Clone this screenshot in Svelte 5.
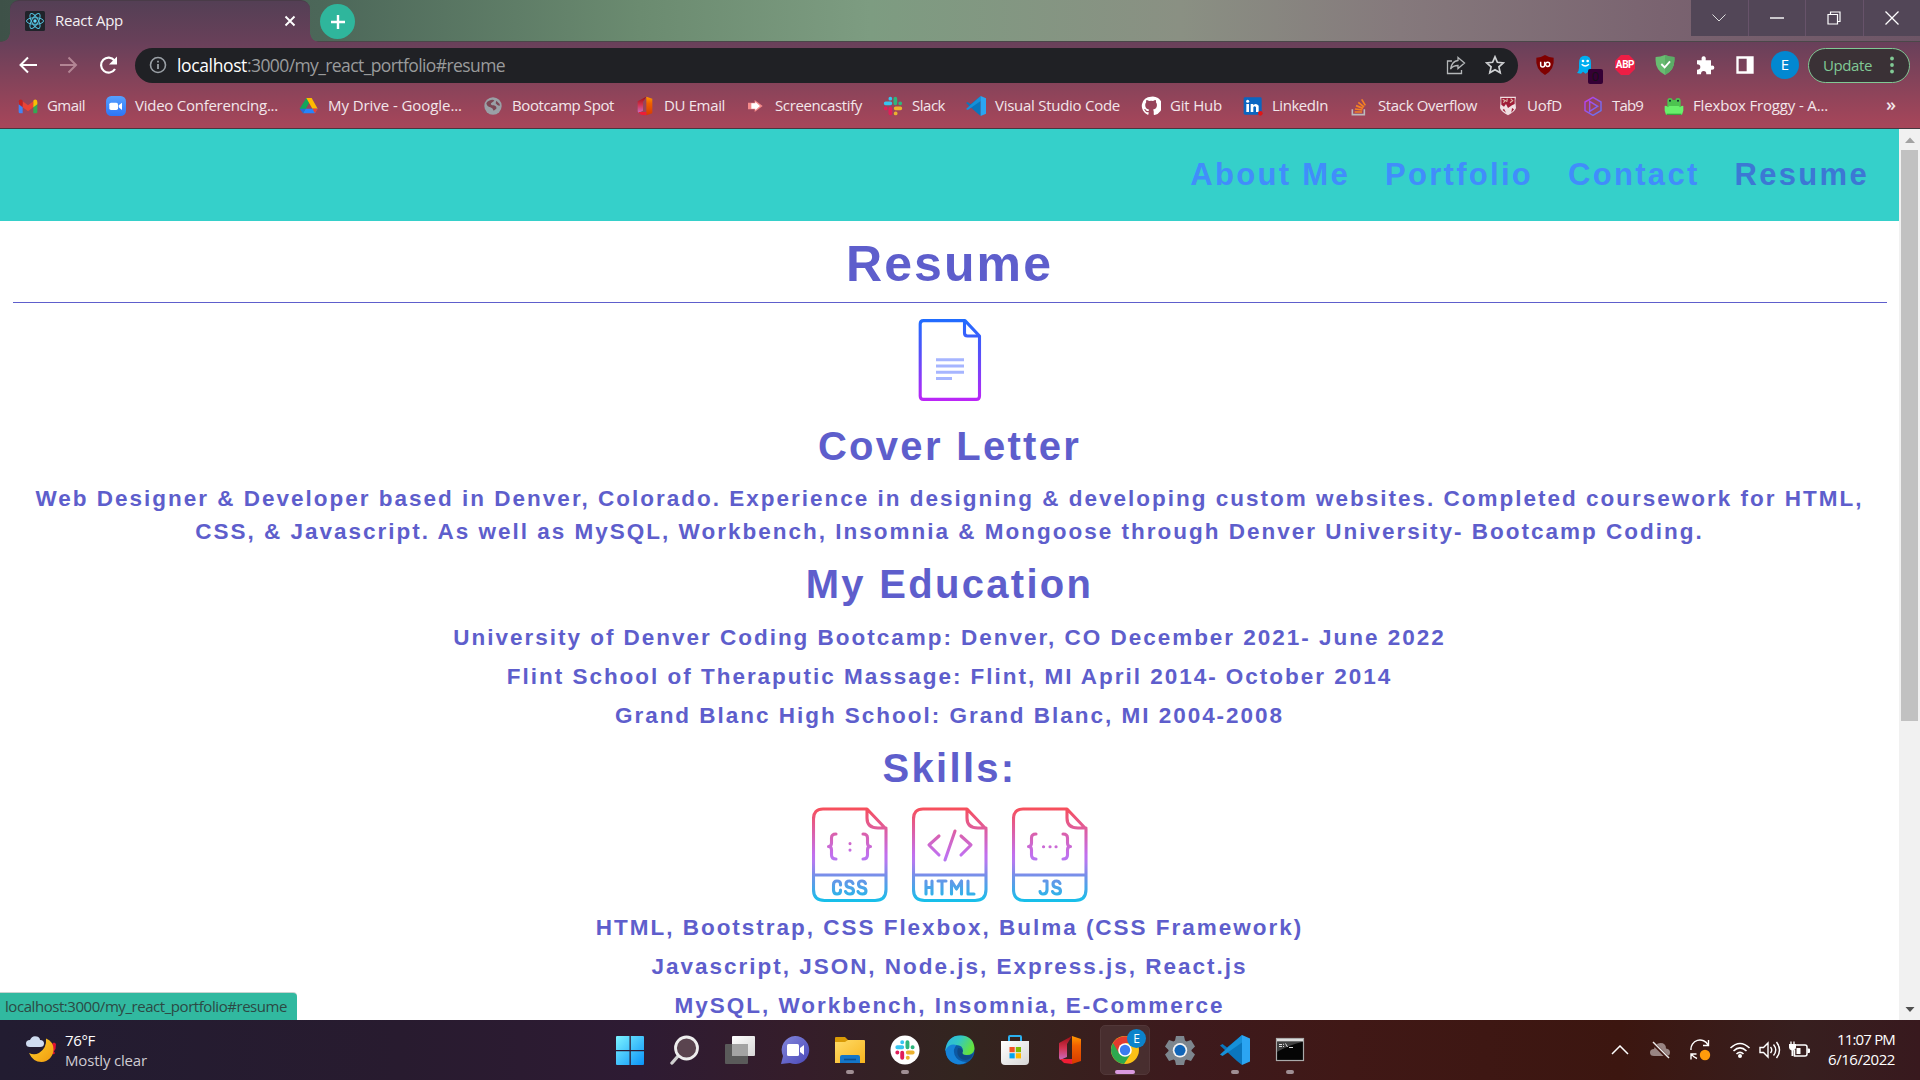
<script>
  const bookmarks = [
    ['gmail', 'Gmail', 38],
    ['zoom', 'Video Conferencing...', 143],
    ['drive', 'My Drive - Google...', 134],
    ['globe', 'Bootcamp Spot', 102],
    ['office', 'DU Email', 61],
    ['cast', 'Screencastify', 87],
    ['slack', 'Slack', 33],
    ['vscode', 'Visual Studio Code', 125],
    ['github', 'Git Hub', 52],
    ['linkedin', 'LinkedIn', 56],
    ['stack', 'Stack Overflow', 99],
    ['uofd', 'UofD', 35],
    ['tab9', 'Tab9', 31],
    ['frog', 'Flexbox Froggy - A...', 135]
  ];
  const extensions = ['ublock', 'ghost', 'abp', 'guard', 'puzzle', 'panel'];
  const education = [
    'University of Denver Coding Bootcamp: Denver, CO December 2021- June 2022',
    'Flint School of Theraputic Massage: Flint, MI April 2014- October 2014',
    'Grand Blanc High School: Grand Blanc, MI 2004-2008'
  ];
  const skills = [
    'HTML, Bootstrap, CSS Flexbox, Bulma (CSS Framework)',
    'Javascript, JSON, Node.js, Express.js, React.js',
    'MySQL, Workbench, Insomnia, E-Commerce'
  ];
  const apps = [
    ['windows', ''], ['search', ''], ['taskview', ''], ['chat', ''], ['folder', 'run'],
    ['slackapp', 'run'], ['edge', ''], ['store', ''], ['office', ''], ['chrome', 'active'],
    ['gear', ''], ['vscode', 'run'], ['cmd', 'run']
  ];

  // Spreads a label's letters so that it fills the given width.
  function fit(node, width) {
    node.style.letterSpacing = '0px';
    const natural = node.getBoundingClientRect().width;
    node.style.letterSpacing = (width - natural) / node.textContent.length + 'px';
  }
</script>

{#snippet icon(name, size)}
  <svg width={size} height={size} viewBox="0 0 30 30"><use href={'#i-' + name} /></svg>
{/snippet}

<svg class="sprite" width="0" height="0">
  <defs>
    <linearGradient id="g-doc" x1="0" y1="0" x2="0" y2="82" gradientUnits="userSpaceOnUse"><stop offset="0" stop-color="#1f6dff" /><stop offset=".35" stop-color="#4a55fa" /><stop offset="1" stop-color="#bd25f7" /></linearGradient>
    <linearGradient id="g-file" x1="0" y1="0" x2="0" y2="95" gradientUnits="userSpaceOnUse"><stop offset="0" stop-color="#f84e57" /><stop offset=".5" stop-color="#c26fee" /><stop offset=".58" stop-color="#b27af0" /><stop offset=".75" stop-color="#6a94e8" /><stop offset="1" stop-color="#14c1ea" /></linearGradient>
    <linearGradient id="g-win" x1="0" y1="0" x2="1" y2="1"><stop offset="0" stop-color="#7cf3ff" /><stop offset="1" stop-color="#0a93f8" /></linearGradient>
    <linearGradient id="g-off" x1="0" y1="0" x2="0" y2="1"><stop offset="0" stop-color="#ff9a00" /><stop offset=".35" stop-color="#f06000" /><stop offset="1" stop-color="#d53a00" /></linearGradient>
    <linearGradient id="g-off2" x1="0" y1="0" x2="0" y2="1"><stop offset="0" stop-color="#9b0d12" /><stop offset=".5" stop-color="#d2324f" /><stop offset="1" stop-color="#c86bc0" /></linearGradient>
    <linearGradient id="g-fold" x1="0" y1="0" x2="1" y2="1"><stop offset="0" stop-color="#ffdb67" /><stop offset="1" stop-color="#f7b41e" /></linearGradient>
    <linearGradient id="g-edge" x1="0" y1="0" x2="1" y2=".4"><stop offset="0" stop-color="#2bb3e6" /><stop offset=".5" stop-color="#33c8c4" /><stop offset="1" stop-color="#64e23f" /></linearGradient>
    <linearGradient id="g-chat" x1="0" y1="0" x2="1" y2="1"><stop offset="0" stop-color="#8387dc" /><stop offset="1" stop-color="#4a48b8" /></linearGradient>
    <linearGradient id="g-moon" x1="0" y1="0" x2="1" y2="1"><stop offset="0" stop-color="#ffd22a" /><stop offset="1" stop-color="#f09a10" /></linearGradient>
    <linearGradient id="g-tab9" x1="0" y1="0" x2="1" y2="1"><stop offset="0" stop-color="#c438e8" /><stop offset="1" stop-color="#5a7bf0" /></linearGradient>
    <linearGradient id="g-zoom" x1="0" y1="0" x2="0" y2="1"><stop offset="0" stop-color="#56a0ff" /><stop offset="1" stop-color="#2d75f7" /></linearGradient>
    <linearGradient id="g-white" x1="0" y1="0" x2="1" y2="1"><stop offset="0" stop-color="#fff" /><stop offset="1" stop-color="#d6d6d6" /></linearGradient>
  </defs>
  <symbol id="i-gmail" viewBox="0 0 30 30"><path d="M1 9v15q0 2 2 2h4V13z" fill="#4285f4" /><path d="M29 9v15q0 2-2 2h-4V13z" fill="#34a853" /><path d="M7 8l8 6 8-6v9l-8 6-8-6z" fill="#ea4335" /><path d="M1 9q0-5 4.500-3.500L7 7v10l-6-4.500z" fill="#c5221f" /><path d="M29 9q0-5-4.500-3.500L23 7v10l6-4.500z" fill="#fbbc04" /></symbol>
  <symbol id="i-zoom" viewBox="0 0 30 30"><rect width="30" height="30" rx="8" fill="url(#g-zoom)" /><rect x="5" y="10" width="13" height="11" rx="2.5" fill="#fff" /><path d="M19 14l5-4v11l-5-4z" fill="#fff" /></symbol>
  <symbol id="i-drive" viewBox="0 0 30 30"><path d="M11 3h8l-4 7-8 16-6-7z" fill="#11a65b" /><path d="M11 3h8l9 16h-8z" fill="#ffba00" /><path d="M10 19h18l-4 7H6z" fill="#2684fc" /><path d="M20 19h8l-4 7z" fill="#ea4335" /><path d="M10 19H1l5 7z" fill="#2b68d8" /></symbol>
  <symbol id="i-globe" viewBox="0 0 30 30"><circle cx="15" cy="15" r="13" fill="#9aa0a6" /><path d="M9 7q6-3 8 0l-5 4q-1 3 4 3 5 1 4 5l-4 3q-1-4-5-5-5-1-6-6 1-3 4-4zM20 7l5 5v3q-4-1-6-4z" fill="#7b4754" /></symbol>
  <symbol id="i-office" viewBox="0 0 30 30"><path d="M4 8L17 1l-5 8v13l-7 3-1-2z" fill="url(#g-off2)" /><path d="M17 1l9 3v22l-9 3V1z" fill="url(#g-off)" /><path d="M5 24l12 0v5L9 28z" fill="#ef1d35" /></symbol>
  <symbol id="i-cast" viewBox="0 0 30 30"><path d="M3 10h10V6l12 9-12 9v-4H3z" fill="#f58a8a" /><path d="M8 11h6V8.500l7 6.500-7 6.500V19H8z" fill="#fff" /></symbol>
  <symbol id="i-slack" viewBox="0 0 30 30"><g fill="none" stroke-width="5.600" stroke-linecap="round"><path d="M11 11H4M11 4v.1" stroke="#36c5f0" /><path d="M18.500 11V4M25.800 11h.1" stroke="#2eb67d" /><path d="M19 18.500h7M19 26v.1" stroke="#ecb22e" /><path d="M11 19v7M4 18.600h.1" stroke="#e01e5a" /></g></symbol>
  <symbol id="i-slackapp" viewBox="0 0 30 30"><circle cx="15" cy="15" r="14.500" fill="#fff" /><use href="#i-slack" x="4.500" y="4.500" width="21" height="21" /></symbol>
  <symbol id="i-vscode" viewBox="0 0 30 30"><path d="M22 0L7 12.500 2.500 9 0 10.500 17 26l5 4v-7z" fill="#0a76bd" /><path d="M2.500 21L0 19.500 22 0v7.500L7 18z" fill="#1690d8" /><path d="M22 0l8 3.500v23L22 30z" fill="#2ba5f2" /></symbol>
  <symbol id="i-github" viewBox="0 0 30 30"><path d="M15 1a14 14 0 00-5 27q1.300.300 1.300-1v-3q-4 1-5-2l-2-2q3-.500 4 2 1 1 3 .500l1-2q-6-1-6-7 0-2 1.500-4-.500-2 .300-3.600 2 0 4 1.600 3-1 6 0 2-1.600 4-1.600.800 1.600.300 3.600 1.500 2 1.500 4 0 6-6 7 1.200 1 1.200 3v4q0 1.300 1.300 1A14 14 0 0015 1" fill="#fff" /></symbol>
  <symbol id="i-linkedin" viewBox="0 0 30 30"><rect x="1" y="2" width="27" height="26" rx="2" fill="#0a66c2" /><path d="M5 12h4v12H5zM11.500 12h4v2q4-4 8 .500V24h-4v-7q-2-3-4 0v7h-4z" fill="#fff" /><circle cx="7" cy="8" r="2.300" fill="#fff" /><circle cx="26" cy="26" r="3.500" fill="#e21515" /></symbol>
  <symbol id="i-stack" viewBox="0 0 30 30"><path d="M5 20v8h18v-8" fill="none" stroke="#bcbbbb" stroke-width="2.400" /><path d="M8.500 24h11M9 19.500l11 1.500M10.500 14.500l10.500 4M14 9.500l8.500 7M19 5l5.500 9" stroke="#f48024" stroke-width="2.600" /></symbol>
  <symbol id="i-uofd" viewBox="0 0 30 30"><path d="M3 1h24l-1 6 1 11q-2 6-12 11Q5 24 3 18L4 7z" fill="#f0dfe2" /><path d="M5 3h20v9l-4 2-6 4-3-6-3 4-4-3z" fill="#a01c38" /><path d="M7 5l4 2-3 3M14 4l-1 5M19 4l3 3-4 3" fill="none" stroke="#d9b6a6" stroke-width="1.800" /><path d="M9 19l3 6-5-4zM21 18l-1 7 4-5z" fill="#a01c38" /></symbol>
  <symbol id="i-tab9" viewBox="0 0 30 30"><path d="M15 2l12 7v13l-12 7-12-7V9zM10 8l12 7.500L10 23z" fill="none" stroke="url(#g-tab9)" stroke-width="2.200" /></symbol>
  <symbol id="i-frog" viewBox="0 0 30 30"><path d="M5 8q0-5 4-5t4 3h4q0-3 4-3t4 5v9H5z" fill="#4dc450" /><path d="M1 15q3-1 5 2l2-2h14l2 2q2-3 5-2v7l-2 6H3l-2-6z" fill="#69f06b" /><path d="M4 27.500h22" stroke="#38a33e" stroke-width="2" /><circle cx="9" cy="7" r="1.500" fill="#123" /><circle cx="21" cy="7" r="1.500" fill="#123" /></symbol>
  <symbol id="i-ublock" viewBox="0 0 30 30"><path d="M15 0q6 4 13 4 2 17-13 26Q0 21 2 4q7 0 13-4" fill="#800000" /><path d="M8.500 10v5q0 3 3 3t3-3v-5" fill="none" stroke="#fff" stroke-width="2.200" /><circle cx="19" cy="14" r="3.200" fill="none" stroke="#fff" stroke-width="2.200" /></symbol>
  <symbol id="i-ghost" viewBox="0 0 30 30"><path d="M6 12q0-11 9-11t9 11v15l-4-2-4 3-4-3-3 3-6-1q3-3 3-8z" fill="#00aef0" /><circle cx="12" cy="9" r="2" fill="#fff" /><circle cx="19" cy="9" r="2" fill="#fff" /><path d="M10 14q5 5 11 0" fill="none" stroke="#fff" stroke-width="2" /></symbol>
  <symbol id="i-abp" viewBox="0 0 30 30"><path d="M9 0h12l9 9v12l-9 9H9l-9-9V9z" fill="#ed1e45" /></symbol>
  <symbol id="i-guard" viewBox="0 0 30 30"><path d="M15 0q7 3 14 3 2 19-14 27Q-1 22 1 3q7 0 14-3" fill="#68bc71" /><path d="M15 0q7 3 14 3 2 19-14 27z" fill="#5bab66" /><path d="M9.500 13.500l5 5 8-9" fill="none" stroke="#fff" stroke-width="2.800" /></symbol>
  <symbol id="i-puzzle" viewBox="0 0 30 30"><path d="M3 8h7q-1-6 3-6t3 6h8v8q5-1 5 3t-5 3v7h-7q0-5-4-5t-4 5H3v-7q5 0 5-4t-5-4z" fill="#fff" /></symbol>
  <symbol id="i-panel" viewBox="0 0 30 30"><path d="M2 2h26v26H2zm3.500 3.500v19h12v-19z" fill="#fff" fill-rule="evenodd" /></symbol>
  <symbol id="i-windows" viewBox="0 0 30 30"><path d="M1 2q0-1 1-1h12.500v14H1zM15.800 1H28q1 0 1 1v13H15.800zM1 16.300h13.500V30H2q-1 0-1-1zM15.800 16.300H29V29q0 1-1 1H15.800z" fill="url(#g-win)" /></symbol>
  <symbol id="i-search" viewBox="0 0 30 30"><path d="M9 20l-7 8" stroke="#cfcfcf" stroke-width="3.400" stroke-linecap="round" /><circle cx="16.500" cy="13" r="11" fill="#5a444f" stroke="#eee" stroke-width="2.800" /></symbol>
  <symbol id="i-taskview" viewBox="0 0 30 30"><rect x="7" y="1" width="23" height="20" rx="1" fill="url(#g-white)" /><rect x="0" y="9" width="23" height="20" rx="1" fill="#5a5a5a" /><path d="M7 9h16v12H7z" fill="#a3a3a3" /></symbol>
  <symbol id="i-chat" viewBox="0 0 30 30"><path d="M15 1a14 14 0 11-5 27l-9 1 2-8A14 14 0 0115 1" fill="url(#g-chat)" /><rect x="7" y="9" width="12" height="12" rx="1.500" fill="#fff" /><path d="M20 13l4-3v10l-4-3z" fill="#fff" /></symbol>
  <symbol id="i-folder" viewBox="0 0 30 30"><path d="M0 3q0-1 1-1h9l3 3v7H0z" fill="#d99a06" /><path d="M0 7h10l3-2h16q1 0 1 1v22H0z" fill="url(#g-fold)" /><path d="M5 28v-6q0-2 2-2h16q2 0 2 2v6z" fill="#1476c9" /><path d="M9 24.500h12" stroke="#0a4f91" stroke-width="1.600" /></symbol>
  <symbol id="i-edge" viewBox="0 0 30 30"><circle cx="15" cy="15" r="14.500" fill="#0c59a4" /><path d="M.5 14Q3 0 16 .5T29.500 14q-1 6-8 6-6 0-3.500-4 0-6-7-6-7 0-11 6z" fill="url(#g-edge)" /><path d="M.6 15q4-7 11-5-4 4-2 10 3 7 12 7-4 3-9 2.200Q1 27 .6 15" fill="#1683d8" /><path d="M13 13q4 0 5 3-2 4 4 4.500 4 0 6-1.500l-2 4q-6 4-11 0-4-4-2-10" fill="#123a6b" opacity=".55" /></symbol>
  <symbol id="i-store" viewBox="0 0 30 30"><path d="M9 7V2q0-1 1-1h10q1 0 1 1v5" fill="none" stroke="#2bb0ee" stroke-width="2" /><path d="M1 6h28v20q0 4-4 4H5q-4 0-4-4z" fill="url(#g-white)" /><path d="M9.500 12h5.200v5.200H9.500z" fill="#f25022" /><path d="M15.800 12H21v5.200h-5.200z" fill="#7fba00" /><path d="M9.500 18.200h5.200v5.200H9.500z" fill="#00a4ef" /><path d="M15.800 18.200H21v5.200h-5.200z" fill="#ffb900" /></symbol>
  <symbol id="i-chrome" viewBox="0 0 30 30"><circle cx="15" cy="15" r="14" fill="#fbc116" /><path d="M15 15L2.900 8A14 14 0 0014 29l6-9z" fill="#2da94f" /><path d="M3 8A14 14 0 0127 8H15v7l-6 3z" fill="#e33b2e" /><circle cx="15" cy="15" r="6.800" fill="#fff" /><circle cx="15" cy="15" r="5.200" fill="#3b7cf0" /></symbol>
  <symbol id="i-gear" viewBox="0 0 30 30"><path d="M11 1h8l1 4.500 1.500 1L26 5l4 6.500-3.500 3.500v1l3.500 3.500L26 26l-4.500-1.500-1.500 1-1 4.500h-8l-1-4.500-1.500-1L4 26 0 19.500 3.500 16v-1L0 11.500 4 5l4.500 1.500 1.500-1z" fill="#7d868e" /><circle cx="15" cy="15.300" r="7.200" fill="#f2f2f2" /><circle cx="15" cy="15.300" r="5.500" fill="#1065b8" /></symbol>
  <symbol id="i-cmd" viewBox="0 0 30 30"><rect x="1.500" y="3.500" width="27" height="22" fill="#050505" stroke="#aaa" stroke-width="1.200" /><path d="M2 4h26v2.500H2z" fill="#dcdcdc" /><path d="M2 7h25Q14 10 2 17z" fill="#404040" /><path d="M4 9.500h3M8.500 8.800v1M8.500 11v1M10.500 8.500l2 3.500M4 11.500h3M14 12.500h4" stroke="#ddd" stroke-width="1" /></symbol>
</svg>

<div class="screen">
  <header class="chrome">
    <div class="strip">
      <div class="tab">
        <svg class="fav" width="20" height="20" viewBox="0 0 20 20"><rect width="20" height="20" rx="1.500" fill="#20232a" /><g fill="none" stroke="#53c1de" stroke-width="1"><ellipse cx="10" cy="10" rx="8.500" ry="3.300" /><ellipse cx="10" cy="10" rx="8.500" ry="3.300" transform="rotate(60 10 10)" /><ellipse cx="10" cy="10" rx="8.500" ry="3.300" transform="rotate(120 10 10)" /></g><circle cx="10" cy="10" r="1.700" fill="#61dafb" /></svg>
        <span class="tabname"><span use:fit={68}>React App</span></span>
        <svg width="12" height="12" viewBox="0 0 12 12"><path d="M1.500 1.500l9 9M10.500 1.500l-9 9" stroke="#fff" stroke-width="1.900" /></svg>
      </div>
      <div class="plus"><svg width="16" height="16" viewBox="0 0 16 16"><path d="M8 1v14M1 8h14" stroke="#fff" stroke-width="2.400" /></svg></div>
      <div class="winbtns">
        <span><svg width="14" height="8" viewBox="0 0 14 8"><path d="M.5.500L7 7 13.500.500" fill="none" stroke="#ddd" stroke-width="1" /></svg></span>
        <span><svg width="14" height="2" viewBox="0 0 14 2"><path d="M0 1h14" stroke="#fff" stroke-width="1.400" /></svg></span>
        <span><svg width="14" height="14" viewBox="0 0 14 14"><path d="M1 3.500h9.500V13H1zM3.500 3V1H13v9.500h-2" fill="none" stroke="#fff" stroke-width="1.200" /></svg></span>
        <span><svg width="14" height="14" viewBox="0 0 14 14"><path d="M.5.500l13 13M13.500.500l-13 13" stroke="#fff" stroke-width="1.300" /></svg></span>
      </div>
    </div>
    <div class="toolbar">
      <svg class="nav" width="20" height="20" viewBox="0 0 20 20"><path d="M19 10H3M10 2.500L2.500 10l7.500 7.500" fill="none" stroke="#fff" stroke-width="2" /></svg>
      <svg class="nav" width="20" height="20" viewBox="0 0 20 20"><path d="M2 10h16M10.500 2.500L18 10l-7.500 7.500" fill="none" stroke="#b38594" stroke-width="2" /></svg>
      <svg class="nav" width="20" height="20" viewBox="0 0 20 20"><path d="M17 14A7.500 7.500 0 1116.500 5.500" fill="none" stroke="#fff" stroke-width="2.200" /><path d="M19 1.500v8h-8z" fill="#fff" /></svg>
      <div class="omnibox">
        <svg width="18" height="18" viewBox="0 0 18 18"><circle cx="9" cy="9" r="7.500" fill="none" stroke="#9aa0a6" stroke-width="1.600" /><path d="M9 8v5M9 4.700v1.800" stroke="#9aa0a6" stroke-width="1.800" /></svg>
        <span class="url"><b use:fit={70}>localhost</b><span use:fit={258}>:3000/my_react_portfolio#resume</span></span>
        <svg class="share" width="20" height="20" viewBox="0 0 20 20"><path d="M6 6H1.500v12.500H15.500V15M12 2.500l6.500 5.500-6.500 5.500V10.500q-5 0-7.500 3.500Q6 6 12 5.500z" fill="none" stroke="#b4b7b9" stroke-width="1.300" /></svg>
        <svg width="20" height="20" viewBox="0 0 20 20"><path d="M10 1.800l2.400 5.500 6 .600-4.500 4 1.300 5.900L10 14.700l-5.200 3.100 1.300-5.900-4.500-4 6-.600z" fill="none" stroke="#cfd1d3" stroke-width="1.700" /></svg>
      </div>
      <div class="exts">
        {#each extensions as e}<span class="ext">{@render icon(e, 20)}{#if e === 'ghost'}<i class="badge">0</i>{:else if e === 'abp'}<i class="abp">ABP</i>{/if}</span>{/each}
      </div>
      <div class="avatar">E</div>
      <div class="update"><span use:fit={49}>Update</span><svg width="4" height="18" viewBox="0 0 4 18"><g fill="#81c995"><circle cx="2" cy="2.500" r="1.900" /><circle cx="2" cy="9" r="1.900" /><circle cx="2" cy="15.500" r="1.900" /></g></svg></div>
    </div>
    <div class="bookmarks">
      {#each bookmarks as [name, label, width]}
        <div class="bm">{@render icon(name, 20)}<span class="slot" style:width="{width}px"><span use:fit={width}>{label}</span></span></div>
      {/each}
      <span class="more">»</span>
    </div>
  </header>

  <main class="viewport">
    <div class="page">
      <nav class="topnav"><a>About Me</a><a>Portfolio</a><a>Contact</a><a class="current">Resume</a></nav>
      <h1>Resume</h1>
      <hr />
      <svg class="doc" width="64" height="84" viewBox="-1 -1 64 84"><g fill="none" stroke="url(#g-doc)" stroke-width="3.100" stroke-linejoin="round"><path d="M4.500 1.600H46L60.500 17v60q0 3.400-3.300 3.400H4.500Q1.200 80.400 1.200 77V5q0-3.400 3.300-3.400z" /><path d="M45.500 2.500V14q0 3 3 3H60" /></g><path d="M17 40.700h28M17 47h28M17 53.300h28M17 59.500h16" stroke="#a6b5ff" stroke-width="3" /></svg>
      <h2>Cover Letter</h2>
      <p>Web Designer &amp; Developer based in Denver, Colorado. Experience in designing &amp; developing custom websites. Completed coursework for HTML,<br />CSS, &amp; Javascript. As well as MySQL, Workbench, Insomnia &amp; Mongoose through Denver University- Bootcamp Coding.</p>
      <h2>My Education</h2>
      <ul>{#each education as line}<li>{line}</li>{/each}</ul>
      <h2>Skills:</h2>
      <div class="files">
        {#each ['CSS', 'HTML', 'JS'] as kind}
          <svg width="76" height="96" viewBox="0 0 76 96"><g fill="none" stroke="url(#g-file)" stroke-width="3.100" stroke-linecap="round" stroke-linejoin="round"><path d="M11 2h44l19 20v60.500q0 11-11 11H12.500q-11 0-11-11V12Q1.500 2 11 2zM55 2v9q0 10 11 10h8M2 68h72" />
            {#if kind === 'CSS'}<path d="M24 27q-4.500 0-4.500 4v5q0 3.500-3 3.500 3 0 3 3.500v5q0 4 4.500 4M51 27q4.500 0 4.500 4v5q0 3.500 3 3.500-3 0-3 3.500v5q0 4-4.500 4M38 36.500v.1M38 43v.1" /><path transform="translate(0 1)" d="M28.500 77v-1q0-3-3.500-3t-3.500 4v5q0 4 3.500 4t3.500-3v-1M41 75.500q-1-2.500-3.500-2.500-3.500 0-3.500 3t3.500 3.500q4 .500 4 3.500t-3.500 3-4.500-2.500M53.500 75.500q-1-2.500-3.500-2.500-3.500 0-3.500 3t3.500 3.500q4 .500 4 3.500t-3.500 3-4.500-2.500" />
            {:else if kind === 'HTML'}<path d="M27 29L17 38l10 10M49 29l10 9-10 10M43 24L33 53" /><path transform="translate(0 1)" d="M14 73v13M20 73v13M14 79.500h6M26 73h8M30 73v13M39.500 86V73l5 8 5-8v13M56 73v13h6" />
            {:else}<path d="M24 27q-4.500 0-4.500 4v5q0 3.500-3 3.500 3 0 3 3.500v5q0 4 4.500 4M51 27q4.500 0 4.500 4v5q0 3.500 3 3.500-3 0-3 3.500v5q0 4-4.500 4M31.500 39.800h.1M38 39.800h.1M44 39.800h.1" /><path transform="translate(0 1)" d="M32 73h3v9q0 4-4 4-2.500 0-3-2.500M48 75.500q-1-2.500-3.500-2.500-3.500 0-3.500 3t3.500 3.500q4 .500 4 3.500t-3.500 3-4.500-2.500" />{/if}</g></svg>
        {/each}
      </div>
      <ul class="skills">{#each skills as line}<li>{line}</li>{/each}</ul>
    </div>
    <div class="scroll">
      <svg width="12" height="21" viewBox="0 0 12 21"><path d="M1 14h10L6 8.500z" fill="#a3a3a3" /></svg>
      <div class="thumb"></div>
      <svg class="down" width="12" height="21" viewBox="0 0 12 21"><path d="M1.500 8h9L6 13z" fill="#505050" /></svg>
    </div>
    <div class="status"><span use:fit={282}>localhost:3000/my_react_portfolio#resume</span></div>
  </main>

  <footer class="taskbar">
    <div class="weather">
      <svg width="32" height="30" viewBox="0 0 32 30"><path d="M26 9q2-3 4 0l-.5 5-2 3h-2z" fill="#e01030" /><circle cx="27.500" cy="18" r="1.300" fill="#e01030" /><path d="M20 3.500q7.500 3 7.500 11A12.500 12.500 0 0115.500 27Q7 27 3 18q5 2.500 10 0 8-5 7-14.500" fill="url(#g-moon)" /><path d="M4 12q-4 0-4-3.500T4 5q2-5 7-3.500Q14 2.500 14 5q4 0 4 3.500T14 12z" fill="#cfdcf0" /></svg>
      <div><div class="temp"><span use:fit={30}>76°F</span></div><div><span use:fit={82}>Mostly clear</span></div></div>
    </div>
    <div class="apps">
      {#each apps as [name, state]}
        <div class="app {state}">{@render icon(name, 30)}{#if state === 'active'}<b class="who">E</b>{/if}{#if state}<i class="dot"></i>{/if}</div>
      {/each}
    </div>
    <div class="tray">
      <svg width="18" height="10" viewBox="0 0 18 10"><path d="M1 9l8-8 8 8" fill="none" stroke="#fff" stroke-width="1.500" /></svg>
      <svg class="cloud" width="22" height="18" viewBox="0 0 22 18"><path d="M5 15q-4 0-4-3.500T5 8q1-6 6.500-6T17 7.500q4 .500 4 4T17 15z" fill="#998583" /><path d="M3 1l16 16" stroke="#401712" stroke-width="3.500" /><path d="M4 1l16 16" stroke="#eee" stroke-width="1.400" /></svg>
      <svg class="sync" width="22" height="22" viewBox="0 0 22 22"><path d="M2 11a9 9 0 0117-5M19.500 1v5.500H14M8 19.500A9 9 0 012.500 15M2 20.500V15h5.500" fill="none" stroke="#fff" stroke-width="1.400" /><circle cx="16" cy="16" r="5.200" fill="#ff9b0b" /></svg>
      <svg class="wifi" width="22" height="18" viewBox="0 0 22 18"><g fill="none" stroke="#fff" stroke-width="1.600"><path d="M1.500 7q9.500-9 19 0M4.500 10q6.500-6.200 13 0M7.500 13q3.500-3.400 7 0" /></g><circle cx="11" cy="15" r="2" fill="#fff" /></svg>
      <svg class="vol" width="22" height="18" viewBox="0 0 22 18"><path d="M1 6.500h3.500L9 2v14l-4.500-4.500H1zM11.500 6q2.500 3 0 6M14.500 3.500q4.500 5.500 0 11M17.500 1q6 8 0 16" fill="none" stroke="#fff" stroke-width="1.400" /></svg>
      <svg class="bat" width="22" height="18" viewBox="0 0 22 18"><path d="M7 4h9q2 0 2 2v7q0 2-2 2H5.500V9" fill="none" stroke="#fff" stroke-width="1.500" /><path d="M7.500 7h4v6h-4zM18.500 7.500h1.500q1 0 1 1v2.500q0 1-1 1h-1.500zM0 3h7v3.500q0 2-2.500 3v5.500h-2v-5.500Q0 8.500 0 6.500z" fill="#fff" /><path d="M2 .5v3M5 .5v3" stroke="#fff" stroke-width="1.300" /></svg>
      <div class="clock"><div><span use:fit={58}>11:07 PM</span></div><div><span use:fit={67}>6/16/2022</span></div></div>
    </div>
  </footer>
</div>

<style>
  :global(body) { margin: 0; overflow: hidden; }
  .sprite { position: absolute; }
  .screen { width: 1920px; height: 1080px; overflow: hidden; display: flex; flex-direction: column; font: 15px 'Open Sans', 'Noto Sans', sans-serif; white-space: nowrap; }
  svg { display: block; flex: none; }
  .chrome { box-sizing: border-box; height: 129px; background: linear-gradient(#543f55 0, #68405a 42px, #84435a 80px, #a8465a 128px); border-bottom: 1px solid #473940; }
  .strip { display: flex; height: 42px; background: linear-gradient(90deg, #3e5148 0, #4c6759 320px, #6b8b70 640px, #7d9c81 870px, #8a9083 1180px, #85797c 1400px, #7a6370 1660px, #6d5566 1920px); box-shadow: inset 0 -1px #4b4749; }
  .tab { box-sizing: border-box; position: relative; width: 300px; height: 42px; margin-left: 10px; padding: 0 14px 1px 15px; display: flex; align-items: center; background: linear-gradient(#543f55, #684059); border-radius: 9px 9px 0 0; border-top: 1px solid #493b48; color: #f4f0f3; }
  .tab::before, .tab::after { content: ''; position: absolute; bottom: 0; width: 9px; height: 9px; }
  .tab::before { left: -9px; background: radial-gradient(circle at 0 0, transparent 8.500px, #684059 9px); }
  .tab::after { right: -9px; background: radial-gradient(circle at 100% 0, transparent 8.500px, #684059 9px); }
  .fav { margin-right: 10px; }
  .tabname { flex: 1; margin-top: -2px; }
  .plus { width: 35px; height: 35px; margin: 4px 0 0 10px; border-radius: 50%; background: #2fb69c; display: grid; place-items: center; }
  .winbtns { display: flex; margin-left: auto; height: 36px; width: 229px; background: #524657; }
  .winbtns span { flex: 1; display: grid; place-items: center; border-left: 1px solid #67536a; }
  .winbtns span:first-child { border: 0; }
  .toolbar { height: 46px; padding-left: 18px; display: flex; align-items: center; }
  .nav { margin-right: 20px; }
  .omnibox { box-sizing: border-box; width: 1383px; height: 35px; margin-left: -3px; padding: 0 13px 0 14px; display: flex; align-items: center; border-radius: 18px; background: #202125; }
  .url { flex: 1; margin-left: 10px; font-size: 17.500px; color: #9a9b9c; }
  .url b { font-weight: 400; color: #fff; }
  .share { margin-right: 19px; }
  .exts { display: flex; gap: 20px; margin-left: 17px; }
  .ext { position: relative; }
  .badge { position: absolute; left: 13px; top: 14px; width: 15px; height: 15px; border-radius: 2px; background: #350035; color: #161016; font: 13px/15px 'Open Sans', sans-serif; text-align: center; }
  .abp { position: absolute; inset: 0; font: 700 10px/20px Roboto, 'Open Sans', sans-serif; letter-spacing: -.4px; color: #fff; text-align: center; }
  .avatar { width: 28px; height: 28px; margin-left: 16px; border-radius: 50%; background: #0288d1; color: #fff; text-align: center; line-height: 27px; }
  .update { box-sizing: border-box; width: 102px; height: 35px; margin-left: 9px; padding: 0 15px 1px 14px; border: 1.500px solid #81c995; border-radius: 18px; background: #3a3136; color: #81c995; display: flex; align-items: center; justify-content: space-between; }
  .bookmarks { height: 36px; padding-left: 18px; display: flex; gap: 20px; align-items: center; color: #f3e6ea; }
  .bm { display: flex; align-items: center; gap: 10px; }
  .slot { display: block; margin: -2px 0 0 -1px; padding-right: 1px; }
  .more { margin: -5px 0 0 37px; font-size: 18px; font-weight: 600; }

  .viewport { position: relative; height: 891px; display: flex; }
  .page { width: 1899px; height: 891px; overflow: hidden; background: #fff; color: #5e5ecc; font-family: 'Liberation Sans', Arial, sans-serif; font-weight: 700; text-align: center; }
  .topnav { box-sizing: border-box; height: 92px; padding: 26px 30px 0 0; display: flex; justify-content: flex-end; gap: 35px; background: #35d0ca; color: #418dfb; font-size: 31px; line-height: 40px; letter-spacing: 2.300px; }
  .current { color: #3c78d4; }
  h1 { margin: 13px 0 8px; font-size: 50px; line-height: 60px; letter-spacing: 2.100px; }
  hr { height: 1px; margin: 0 12px 0 13px; border: 0; background: #5e5ecc; }
  .doc { margin: 15px auto 20px; }
  h2 { margin: 0; font-size: 40px; line-height: 48px; letter-spacing: 2.300px; }
  p { margin: 12px 0; font-size: 22.500px; line-height: 33px; letter-spacing: 2px; }
  ul { margin: 13px 0 12px; padding: 0; list-style: none; font-size: 22.500px; line-height: 33px; letter-spacing: 1.980px; display: grid; gap: 6px; }
  .files { display: flex; justify-content: center; gap: 24px; margin-top: 15px; }
  .skills { margin-top: 8px; }
  .scroll { width: 21px; background: #f1f1f1; display: flex; flex-direction: column; align-items: center; }
  .thumb { width: 17px; height: 571px; background: #c1c1c1; }
  .down { margin-top: auto; }
  .status { box-sizing: border-box; position: absolute; left: 0; bottom: 0; width: 297px; height: 27px; padding-left: 5px; line-height: 26px; background: #31b9a0; color: #2c4944; border-radius: 0 4px 0 0; box-shadow: 0 -1px #c9d3d0; }

  .taskbar { position: relative; height: 60px; display: flex; align-items: center; color: #fff; line-height: 20px; background: linear-gradient(90deg, #221c31 0, #281b2f 400px, #2e1b33 640px, #351d2a 800px, #33251f 960px, #3d1a1d 1180px, #401816 1350px, #3c1610 1620px, #371f1f 1800px, #38191e 1920px); }
  .weather { width: 602px; display: flex; align-items: center; gap: 7px; box-sizing: border-box; padding-left: 26px; color: #cfcbd2; }
  .weather > div { margin-top: -1px; }
  .temp { color: #fff; }
  .apps { display: flex; }
  .app { position: relative; width: 55px; height: 60px; display: grid; place-items: center; }
  .active::before { content: ''; position: absolute; inset: 5px 2px 5px 3px; border-radius: 5px; border: 1px solid #5a4143; background: #4d3435; opacity: .75; box-sizing: border-box; }
  .active svg { position: relative; }
  .who { position: absolute; left: 30px; top: 9px; width: 19px; height: 19px; border-radius: 50%; background: #0b83cb; font: 12px/19px 'Open Sans', sans-serif; text-align: center; }
  .dot { position: absolute; left: 24px; bottom: 6px; width: 8px; height: 4px; border-radius: 2px; background: #a08f94; }
  .active .dot { left: 18px; width: 20px; background: #d99ae0; }
  .tray { margin-left: auto; padding-right: 25px; display: flex; align-items: center; }
  .cloud { margin-left: 20px; }
  .sync { margin-left: 18px; }
  .wifi { margin-left: 18px; }
  .vol { margin-left: 8px; }
  .bat { margin-left: 8px; }
  .clock { width: 84px; margin-top: -2px; text-align: right; }
</style>
